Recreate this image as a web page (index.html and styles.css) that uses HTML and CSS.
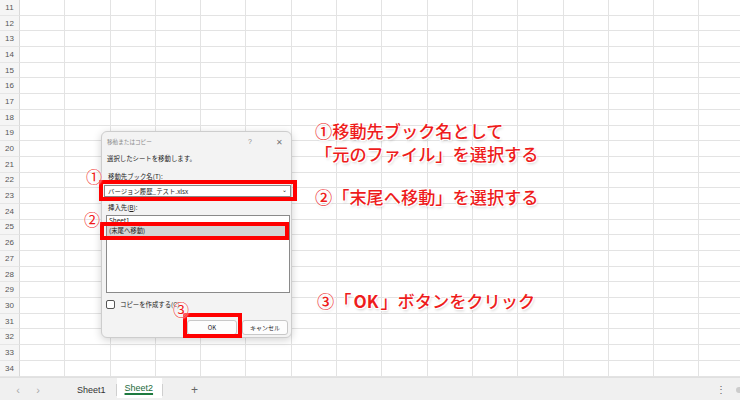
FILE: index.html
```html
<!DOCTYPE html>
<html lang="ja">
<head>
    <meta charset="UTF-8">
    <meta name="viewport" content="width=device-width, initial-scale=1.0">
    <title>移動またはコピー</title>
    <link rel="stylesheet" href="styles.css">
</head>
<body>
    <div class="window">
        <div class="sheet" id="sheet"></div>

        <div class="tabbar">
            <span class="nav">&lsaquo;</span>
            <span class="nav">&rsaquo;</span>
            <span class="tab">Sheet1</span>
            <span class="sep"></span>
            <span class="tab active"><u>Sheet2</u></span>
            <span class="sep"></span>
            <span class="add">+</span>
            <span class="more">&#8942;</span>
            <span class="dot"></span>
        </div>

        <div class="dialog">
            <div class="dialog-title">
                <span>移動またはコピー</span>
                <span class="help">?</span>
                <span class="close">&#x2715;</span>
            </div>
            <div class="dialog-body">
                <div class="msg">選択したシートを移動します。</div>
                <div class="label">移動先ブック名(<u>T</u>):</div>
                <div class="select">
                    <span>バージョン履歴_テスト.xlsx</span>
                    <span class="caret">&#8964;</span>
                </div>
                <div class="label label-b">挿入先(<u>B</u>):</div>
                <div class="listbox">
                    <div class="item">Sheet1</div>
                    <div class="item selected">(末尾へ移動)</div>
                </div>
                <div class="check">
                    <span class="box"></span>
                    <span>コピーを作成する(C)</span>
                </div>
                <div class="buttons">
                    <button class="btn ok">OK</button>
                    <button class="btn">キャンセル</button>
                </div>
            </div>
        </div>

        <div class="mark mark-book"></div>
        <div class="mark mark-end"></div>
        <div class="mark mark-ok"></div>

        <span class="num num-1">①</span>
        <span class="num num-2">②</span>
        <span class="num num-3">③</span>

        <div class="note note-1">
            <div>①移動先ブック名として</div>
            <div>「元のファイル」を選択する</div>
        </div>
        <div class="note note-2">②「末尾へ移動」を選択する</div>
        <div class="note note-3">③「<b>OK</b>」ボタンをクリック</div>
    </div>

    <script>
        const sheet = document.getElementById('sheet');
        for (let r = 11; r <= 34; r++) {
            const head = document.createElement('div');
            head.className = 'rowhead';
            head.textContent = r;
            sheet.appendChild(head);
            for (let c = 0; c < 16; c++) {
                const cell = document.createElement('div');
                cell.className = 'cell';
                sheet.appendChild(cell);
            }
        }
    </script>
</body>
</html>
```

FILE: styles.css
```css
body {
    margin: 0;
    background: #fff;
    font-family: 'Noto Sans CJK JP', 'Noto Sans', sans-serif;
}

.window {
    position: relative;
    width: 740px;
    height: 400px;
    overflow: hidden;
}

.sheet {
    display: grid;
    grid-template-columns: 20px repeat(16, 45.3px);
    grid-auto-rows: 15.7px;
    height: 377px;
    overflow: hidden;
}

.rowhead {
    background: #f5f5f5;
    border-right: 1px solid #d9d9d9;
    border-bottom: 1px solid #e6e6e6;
    box-sizing: border-box;
    color: #555;
    font-family: 'Liberation Sans', sans-serif;
    font-size: 8px;
    display: flex;
    align-items: center;
    justify-content: center;
}

.cell {
    border-right: 1px solid #e3e3e3;
    border-bottom: 1px solid #e3e3e3;
    box-sizing: border-box;
}

.tabbar {
    height: 23px;
    background: #f0f0f0;
    border-top: 1px solid #e0e0e0;
    display: flex;
    align-items: center;
    font-family: 'Liberation Sans', sans-serif;
    font-size: 9px;
    color: #333;
}

.nav {
    color: #aaa;
    font-size: 11px;
    width: 20px;
    text-align: center;
}

.nav:first-child {
    margin-left: 8px;
}

.tab {
    padding: 0 10px 0 9px;
}

.tab:nth-child(3) {
    margin-left: 20px;
}

.tab.active {
    background: #fff;
    color: #1d6b3a;
    align-self: stretch;
    display: flex;
    align-items: center;
    margin-bottom: 3px;
    padding: 0 9px 0 8px;
}

.tab.active u {
    text-decoration-color: #1e7a3f;
    text-decoration-thickness: 1.5px;
    text-underline-offset: 2px;
}

.sep {
    width: 1px;
    height: 12px;
    background: #cfcfcf;
}

.add {
    color: #666;
    font-size: 12px;
    margin-left: 28px;
}

.more {
    margin-left: auto;
    color: #666;
    font-size: 10px;
}

.dot {
    width: 6px;
    height: 6px;
    border-radius: 50%;
    background: #ccc;
    margin: 0 -2px 0 10px;
}

/* dialog */

.dialog {
    position: absolute;
    left: 101px;
    top: 131px;
    width: 191px;
    height: 207px;
    box-sizing: border-box;
    background: #f3f3f3;
    border: 1px solid #cdcdcd;
    border-radius: 6px;
    box-shadow: 0 2px 8px rgba(0, 0, 0, 0.18);
    color: #222;
    font-size: 6.4px;
}

.dialog-title {
    height: 19px;
    display: flex;
    align-items: center;
    padding: 0 8px 0 5px;
    color: #8a8a8a;
    font-size: 5.6px;
}

.help {
    margin-left: auto;
    font-family: 'Liberation Sans', sans-serif;
    font-size: 7px;
}

.close {
    margin-left: 24px;
    font-size: 8px;
    color: #777;
}

.dialog-body {
    padding: 0 0 0 2px;
}

.msg {
    margin: 3px 0 0 3px;
    line-height: 10px;
}

.label {
    margin: 8px 0 0 4px;
    line-height: 10px;
}

.label-b {
    margin-top: 6px;
}

.select {
    margin-top: 3px;
    width: 187px;
    height: 12px;
    box-sizing: border-box;
    background: #fff;
    border: 1px solid #8a8a8a;
    display: flex;
    align-items: center;
    padding: 0 3px;
}

.caret {
    margin-left: auto;
    font-size: 6px;
    line-height: 6px;
    margin-top: -3px;
}

.listbox {
    margin: 2px 0 0 2px;
    width: 184px;
    height: 78px;
    box-sizing: border-box;
    background: #fff;
    border: 1px solid #8a8a8a;
}

.item {
    height: 10px;
    line-height: 10px;
    padding-left: 2px;
}

.item.selected {
    background: #d4d4d4;
    height: 11px;
}

.check {
    margin: 6px 0 0 2px;
    display: flex;
    align-items: center;
    gap: 5px;
    height: 11px;
}

.box {
    width: 7px;
    height: 7px;
    border: 1px solid #555;
    border-radius: 2px;
    background: #fff;
}

.buttons {
    margin-top: 10px;
    display: flex;
    justify-content: flex-end;
    gap: 5px;
    padding-right: 3px;
}

.btn {
    height: 15px;
    width: 46px;
    padding: 0;
    background: #fdfdfd;
    border: 1px solid #c8c8c8;
    border-radius: 3px;
    font-family: 'Noto Sans CJK JP', sans-serif;
    font-size: 6px;
    color: #222;
}

.btn.ok {
    width: 50px;
}

/* annotations */

.mark {
    position: absolute;
    border: 4px solid #ff0000;
    box-sizing: border-box;
}

.mark-book {
    left: 99px;
    top: 180px;
    width: 198px;
    height: 21px;
}

.mark-end {
    left: 100px;
    top: 222px;
    width: 189px;
    height: 18px;
}

.mark-ok {
    left: 183px;
    top: 313px;
    width: 59px;
    height: 25px;
}

.num {
    position: absolute;
    color: #f01a1a;
    font-size: 16px;
    line-height: 16px;
    text-shadow: 0 0 2px #fff, 0 0 2px #fff, 0 0 3px #fff;
}

.num-1 {
    left: 86px;
    top: 168px;
}

.num-2 {
    left: 84px;
    top: 211px;
}

.num-3 {
    left: 173px;
    top: 301px;
}

.note {
    position: absolute;
    left: 315px;
    color: #ee1c1c;
    font-size: 17.2px;
    font-weight: 500;
    line-height: 23px;
    white-space: nowrap;
    text-shadow: 1px 1px 0 #fff, -1px -1px 0 #fff, 1px -1px 0 #fff, -1px 1px 0 #fff,
        1px 2px 3px rgba(0, 0, 0, 0.2);
}

.note-1 {
    top: 119px;
}

.note-2 {
    top: 185px;
}

.note-3 {
    left: 317px;
    top: 289px;
}

.note-3 b {
    font-weight: 700;
    padding: 0 2px;
}
```
